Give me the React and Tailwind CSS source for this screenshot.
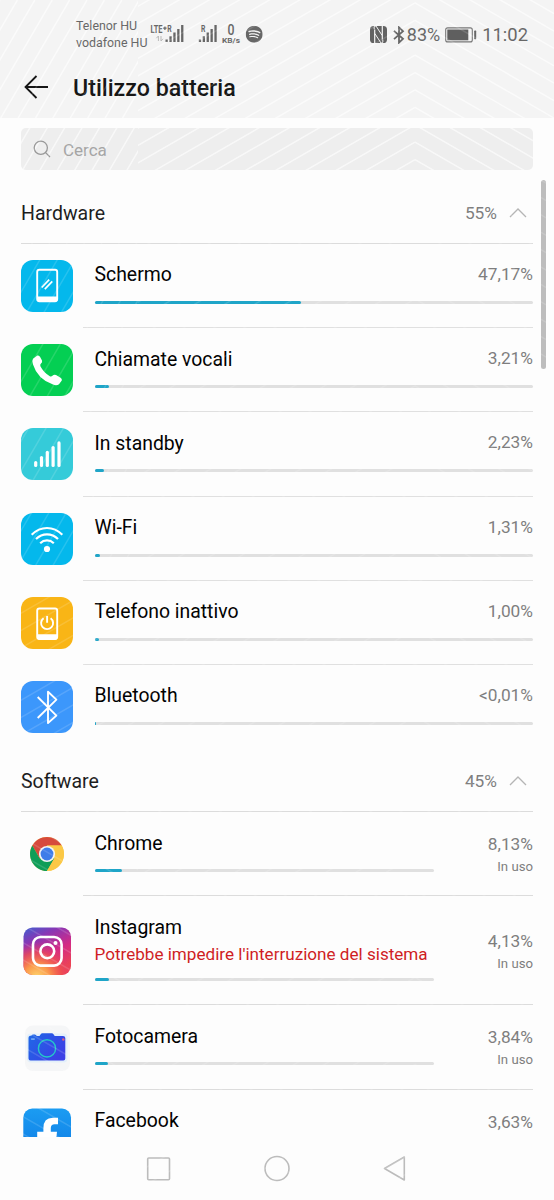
import React from 'react';
import { SiSpotify } from 'react-icons/si';

const tile = 'w-[52px] h-[52px] rounded-[12px] shrink-0 flex items-center justify-center';

const ScreenIcon = () => (
  <div className={`${tile} bg-[#04b8ec]`}>
    <svg width="52" height="52" viewBox="0 0 52 52" fill="none">
      <rect x="16.2" y="9.8" width="20" height="31.5" rx="2.2" stroke="#fff" strokeWidth="1.9" />
      <path d="M16 36.5h20.4v3q0 2.3-2.2 2.3H18.2q-2.2 0-2.2-2.3z" fill="#fff" />
      <path d="M20.7 27.5l7.5-7.8M23.8 29.2l7.5-7.8" stroke="#fff" strokeWidth="1.7" />
    </svg>
  </div>
);

const PhoneIcon = () => (
  <div className={`${tile} bg-[#04cf53]`}>
    <svg width="52" height="52" viewBox="0 0 52 52" fill="#fff">
      <path d="M12 14.8L16.3 11.4Q17.8 11.2 19 12.8L21 16.4Q21.6 18.4 20 19.6Q18.8 20.6 19.4 22.2Q22.3 28 28.8 32.3Q30.4 33 31.4 31.8Q33 30.2 35 31L39.6 33.8Q41.3 35 40.8 36.6L38 40.3Q35.7 41.8 32 40.6Q16.6 35.2 12 20.5Q10.7 16.6 12 14.8Z" />
    </svg>
  </div>
);

const StandbyIcon = () => (
  <div className={`${tile} bg-[#35cbd9]`}>
    <svg width="52" height="52" viewBox="0 0 52 52" fill="#fff">
      <rect x="13.1" y="33" width="3.2" height="6" rx="1.6" />
      <rect x="18.9" y="28" width="3.2" height="11" rx="1.6" />
      <rect x="24.7" y="22.8" width="3.2" height="16.2" rx="1.6" />
      <rect x="30.5" y="18" width="3.2" height="21" rx="1.6" />
      <rect x="36.4" y="13.3" width="3.2" height="25.7" rx="1.6" />
    </svg>
  </div>
);

const WifiIcon = () => (
  <div className={`${tile} bg-[#04b8ec]`}>
    <svg width="52" height="52" viewBox="0 0 52 52" fill="none" stroke="#fff" strokeWidth="2.2">
      <path d="M10.7 21.8Q17.4 15 26 15t15.3 6.8M15 26q4.8-4.7 11-4.7T37 26M19.2 30.2q2.9-2.8 6.8-2.8t6.8 2.8" />
      <circle cx="26" cy="36" r="3.1" fill="#fff" stroke="none" />
    </svg>
  </div>
);

const IdleIcon = () => (
  <div className={`${tile} bg-[#f9b516]`}>
    <svg width="52" height="52" viewBox="0 0 52 52" fill="none">
      <rect x="16.2" y="11.5" width="20" height="30.5" rx="2.2" stroke="#fff" strokeWidth="1.9" />
      <path d="M16 37.2h20.4v3.2q0 2.4-2.2 2.4H18.2q-2.2 0-2.2-2.4z" fill="#fff" />
      <path d="M22.6 21.3a6 6 0 1 0 7 0M26.1 19v6.8" stroke="#fff" strokeWidth="1.9" />
    </svg>
  </div>
);

const BluetoothIcon = () => (
  <div className={`${tile} bg-[#3c97fb]`}>
    <svg width="52" height="52" viewBox="0 0 52 52" fill="none" stroke="#fff" strokeWidth="1.9">
      <path d="M16.7 16L35.4 34.6L27 42V10.8L35.4 18.6L16.7 37" strokeLinejoin="round" />
    </svg>
  </div>
);

const ChromeIcon = () => (
  <svg width="52" height="52" viewBox="0 0 52 52" className="shrink-0">
    <circle cx="26" cy="26" r="17" fill="#fbc845" />
    <path d="M11.3 17.5A17 17 0 0 1 40.7 17.5H26L18.6 30.2Z" fill="#d64a3c" />
    <path d="M11.3 17.5A17 17 0 0 0 26 43L33.4 30.2H18.6Z" fill="#0f9d58" />
    <path d="M40.7 17.5A17 17 0 0 1 26 43L33.4 30.2L26 17.5Z" fill="#fbc845" />
    <circle cx="26" cy="26" r="8.1" fill="#f4f4f4" />
    <circle cx="26" cy="26" r="6.4" fill="#3e7de9" />
  </svg>
);

const InstagramIcon = () => (
  <svg width="52" height="52" viewBox="0 0 52 52" fill="none" className="shrink-0">
    <defs>
      <linearGradient id="igBase" x1="0" y1="0" x2="0.5" y2="1">
        <stop offset="0" stopColor="#3f5fd0" />
        <stop offset="0.3" stopColor="#8a36b4" />
        <stop offset="0.65" stopColor="#d32a85" />
        <stop offset="1" stopColor="#ec4355" />
      </linearGradient>
      <radialGradient id="igGlow" cx="0.28" cy="1.05" r="0.75">
        <stop offset="0" stopColor="#fdd66e" />
        <stop offset="0.35" stopColor="#fb9a4b" />
        <stop offset="0.7" stopColor="#f0514f" stopOpacity="0.7" />
        <stop offset="1" stopColor="#e0357a" stopOpacity="0" />
      </radialGradient>
    </defs>
    <rect x="2.5" y="2.5" width="47.5" height="47.5" rx="9" fill="url(#igBase)" />
    <rect x="2.5" y="2.5" width="47.5" height="47.5" rx="9" fill="url(#igGlow)" />
    <rect x="12" y="12" width="28.6" height="28.6" rx="7.5" stroke="#fff" strokeWidth="2.6" />
    <circle cx="26.3" cy="26.3" r="6.9" stroke="#fff" strokeWidth="2.6" />
    <circle cx="34.5" cy="18.1" r="2" fill="#fff" />
  </svg>
);

const CameraIcon = () => (
  <svg width="52" height="52" viewBox="0 0 52 52" fill="none" className="shrink-0">
    <defs>
      <linearGradient id="camBody" x1="0" y1="0" x2="1" y2="0.6">
        <stop offset="0" stopColor="#1e6ae6" />
        <stop offset="1" stopColor="#3a3fe6" />
      </linearGradient>
    </defs>
    <rect x="4" y="4.5" width="45" height="45.5" rx="8" fill="#f5f6f7" />
    <g transform="translate(0 1.5)">
      <rect x="6" y="11" width="40.5" height="29" rx="4" fill="#e3f0fa" />
      <path d="M9 13.3h1.2q.8-1.3 2-1.3h1.6q1.2 0 2 1.5h2.7l1.4-2.1q.5-.7 1.4-.7h9.6q.9 0 1.4.7l1.4 2.1h8.6q2 0 2 2v20.6q0 2-2 2H9.5q-2 0-2-2V15.2q0-1.6 1.5-1.9z" fill="url(#camBody)" />
      <circle cx="26" cy="25.9" r="8.6" stroke="#25c7c9" strokeWidth="1.4" />
      <rect x="9.8" y="15.8" width="4.2" height="1.6" rx="0.8" fill="#6fa6f3" />
      <circle cx="42.3" cy="17" r="1.2" fill="#e0607c" />
    </g>
  </svg>
);

const FacebookIcon = () => (
  <svg width="52" height="52" viewBox="0 0 52 52" className="shrink-0">
    <defs>
      <linearGradient id="fbBg" x1="0" y1="0" x2="0" y2="1">
        <stop offset="0" stopColor="#1b9cf2" />
        <stop offset="1" stopColor="#0f7be4" />
      </linearGradient>
    </defs>
    <rect x="2.3" y="2.5" width="47.7" height="47.5" rx="9" fill="url(#fbBg)" />
    <path d="M22.4 50V34h-6.2v-8.2h6.2v-3.6q0-10.4 9.5-10.4H37v6.4h-3.4q-3.8 0-3.8 3.8v3.8H36L35.1 34h-5.3v16z" fill="#fff" />
  </svg>
);

const hardware = [
  { name: 'Schermo', value: '47,17%', pct: 47.17, icon: <ScreenIcon /> },
  { name: 'Chiamate vocali', value: '3,21%', pct: 3.21, icon: <PhoneIcon /> },
  { name: 'In standby', value: '2,23%', pct: 2.23, icon: <StandbyIcon /> },
  { name: 'Wi-Fi', value: '1,31%', pct: 1.31, icon: <WifiIcon /> },
  { name: 'Telefono inattivo', value: '1,00%', pct: 1.0, icon: <IdleIcon /> },
  { name: 'Bluetooth', value: '<0,01%', pct: 0.15, icon: <BluetoothIcon /> },
];

const software = [
  { name: 'Chrome', value: '8,13%', pct: 8.13, status: 'In uso', icon: <ChromeIcon /> },
  {
    name: 'Instagram',
    value: '4,13%',
    pct: 4.13,
    status: 'In uso',
    warning: "Potrebbe impedire l'interruzione del sistema",
    icon: <InstagramIcon />,
  },
  { name: 'Fotocamera', value: '3,84%', pct: 3.84, status: 'In uso', icon: <CameraIcon /> },
  { name: 'Facebook', value: '3,63%', pct: 3.63, status: '', icon: <FacebookIcon /> },
];

const Bar = ({ pct }) => (
  <div className="h-[3px] w-full rounded-full bg-[#e0e0e0]">
    <div className="h-full rounded-full bg-[#1fa5c8]" style={{ width: `${pct}%` }} />
  </div>
);

const SectionHeader = ({ title, value }) => (
  <div className="ml-[21px] mr-[21px] h-[63px] pt-[3px] flex items-center border-b border-[#dcdcdc]">
    <h2 className="text-[19.5px] text-[#1c1c1c]">{title}</h2>
    <span className="ml-auto text-[17.3px] text-[#7e7e7e]">{value}</span>
    <svg width="18" height="12" viewBox="0 0 18 12" className="ml-3 mr-[6px] mb-0.5" fill="none">
      <path d="M1 10L9 2l8 8" stroke="#b5b5b5" strokeWidth="1.3" />
    </svg>
  </div>
);

const HardwareRow = ({ item, last }) => (
  <div className="pl-[21px] pr-[21px] h-[84.2px] flex">
    <div className="w-[62px] shrink-0 pt-[16px]">{item.icon}</div>
    <div className={`flex-1 pl-[11.5px] pt-[19px] ${last ? '' : 'border-b border-[#e0e0e0]'}`}>
      <div className="flex h-6 items-center justify-between">
        <span className="text-[19.4px] text-black">{item.name}</span>
        <span className="text-[17.3px] text-[#7e7e7e]">{item.value}</span>
      </div>
      <div className="pt-[14px]"><Bar pct={item.pct} /></div>
    </div>
  </div>
);

const SoftwareRow = ({ item }) => (
  <div className={`pl-[21px] pr-[21px] flex ${item.warning ? 'h-[109px]' : 'h-[84.2px]'}`}>
    <div className="w-[62px] shrink-0 flex items-center">{item.icon}</div>
    <div className="flex-1 pl-[11.5px] flex border-b border-[#dcdcdc]">
      <div className="w-[339px] pt-[19px]">
        <div className="flex h-6 items-center text-[19.4px] text-black">{item.name}</div>
        {item.warning && (
          <div className="flex h-[25px] items-center whitespace-nowrap text-[17.1px] text-[#cf1c22] pt-[5px]">
            {item.warning}
          </div>
        )}
        <div className="pt-[14px]"><Bar pct={item.pct} /></div>
      </div>
      <div className="ml-auto flex flex-col justify-center items-end pt-[3px]">
        <span className="text-[17.3px] leading-6 text-[#7e7e7e]">{item.value}</span>
        <span className="h-[22px] text-[13.2px] leading-[22px] text-[#7e7e7e]">{item.status}</span>
      </div>
    </div>
  </div>
);

const Bars = ({ x }) => (
  <>
    <rect x={x} y="14.5" width="2.3" height="2.5" />
    <rect x={x + 3.9} y="11.3" width="2.3" height="5.7" />
    <rect x={x + 7.8} y="7.5" width="2.3" height="9.5" />
    <rect x={x + 11.7} y="4" width="2.3" height="13" />
    <rect x={x + 15.6} y="0" width="2.3" height="17" />
  </>
);

const StatusBar = () => (
  <div className="h-[60px] pl-[76px] pr-[26px] pt-[17px] flex items-start text-[#676767]">
    <div className="w-[74px] text-[12.4px] leading-[17px] whitespace-nowrap">
      <div>Telenor HU</div>
      <div>vodafone HU</div>
    </div>
    <svg width="116" height="20" viewBox="0 0 116 20" className="mt-[8px] font-bold overflow-visible" fill="#676767">
      <text x="0.5" y="8" fontSize="10.5" textLength="12" lengthAdjust="spacingAndGlyphs">LTE</text>
      <path d="M13.2 3.2h3.4M14.9 1.5v3.4" stroke="#676767" strokeWidth="1.2" />
      <text x="17.3" y="6.6" fontSize="8.5" textLength="4.4" lengthAdjust="spacingAndGlyphs">R</text>
      <path d="M8.4 16v-5l-2 2.2M11 11v5l2-2.2" stroke="#b9b9b9" fill="none" />
      <Bars x={15.5} />
      <text x="51" y="6.6" fontSize="8.5" textLength="4.4" lengthAdjust="spacingAndGlyphs">R</text>
      <Bars x={48.8} />
      <text x="77.5" y="10.4" fontSize="14" fontWeight="500" textLength="7" lengthAdjust="spacingAndGlyphs">0</text>
      <text x="72" y="18" fontSize="7.8" textLength="18" lengthAdjust="spacingAndGlyphs">KB/s</text>
      <g transform="translate(95.7 0.7)"><SiSpotify size={17} /></g>
    </svg>
    <div className="ml-auto h-[35px] flex items-center">
      <svg width="17" height="17" viewBox="0 0 17 17">
        <rect width="17" height="17" rx="3.6" fill="#626262" />
        <path d="M4.7 17V3.4M12.3 0v13.6" stroke="#f4f4f4" strokeWidth="1.2" />
        <path d="M4.2 3.2V1.2q0-1 .9-1.2H6l6.2 9.5M12.8 13.8v2q0 1-.9 1.2H11L4.8 7.5" stroke="#f4f4f4" strokeWidth="1" fill="none" />
      </svg>
      <svg width="12" height="18" viewBox="0 0 12 18" className="ml-[6px]" fill="none" stroke="#676767" strokeWidth="1.8">
        <path d="M1 4.8l9 8-4 3.8V1.4l4 3.8-9 8" />
      </svg>
      <span className="ml-[2px] text-[18px]">83%</span>
      <svg width="32" height="16" viewBox="0 0 32 16" className="ml-[5px]">
        <rect x="0.7" y="0.9" width="26.6" height="14" rx="2" fill="none" stroke="#777" strokeWidth="1.1" />
        <rect x="2.3" y="2.5" width="21" height="10.8" fill="#5f5f5f" />
        <rect x="29.2" y="3.6" width="2" height="8.6" rx="0.6" fill="#676767" />
      </svg>
      <span className="ml-[5px] text-[18.4px]">11:02</span>
    </div>
  </div>
);

// Faint isometric lines, in page coordinates: dx/dy shift them into a nested panel
const step = 17.4;
const idx = Array.from({ length: 100 }, (_, i) => i - 20);

const LineWeave = ({ id, opacity, dx = 0, dy = 0 }) => (
  <svg width="554" height="1200" className="absolute left-0 top-0 pointer-events-none" stroke="#fff" strokeWidth="1.5" strokeOpacity={opacity}>
    <defs>
      <clipPath id={`${id}Steep`}><rect width="138" height="570" /></clipPath>
      <clipPath id={`${id}Rise`}><path d="M138 0H415V1200H138zM0 570H138V780H0z" /></clipPath>
      <clipPath id={`${id}Fall`}><path d="M415 0H554V1200H415zM0 780H138V1200H0z" /></clipPath>
    </defs>
    <g transform={`translate(${-dx} ${-dy})`}>
      <g clipPath={`url(#${id}Steep)`}>
        {idx.map((i) => <path key={i} d={`M${i * step - 350} 600L${i * step} 0`} />)}
      </g>
      <g clipPath={`url(#${id}Rise)`}>
        {idx.map((i) => <path key={i} d={`M0 ${3 + i * step + 239.5}L415 ${3 + i * step}`} />)}
      </g>
      <g clipPath={`url(#${id}Fall)`}>
        {idx.map((i) => <path key={i} d={`M0 ${3 + i * step - 239.5}L554 ${3 + i * step + 80.2}`} />)}
      </g>
    </g>
  </svg>
);

const App = () => {
  return (
    <div className="relative w-[554px] h-[1200px] overflow-hidden bg-[#fdfdfd] font-[Roboto,sans-serif] flex flex-col">
      <header className="relative h-[118px] shrink-0 overflow-hidden bg-[#f4f4f4]">
        <LineWeave id="head" opacity={0.6} />
        <div className="relative">
          <StatusBar />
          <div className="flex items-center h-[56px] pl-[24px]">
            <svg width="25" height="26" viewBox="0 0 25 26" fill="none" stroke="#161616" strokeWidth="1.8" className="-mt-[2px]">
              <path d="M12.5 2L1.5 13l11 11M1.5 13H24" />
            </svg>
            <h1 className="ml-[24px] text-[23.2px] font-medium text-[#161616]">Utilizzo batteria</h1>
          </div>
        </div>
      </header>

      <main className="h-[1019px] shrink-0 overflow-hidden pt-[10px]">
        <div className="relative overflow-hidden mx-[21px] h-[42px] rounded-[5px] bg-[#eee]">
          <LineWeave id="search" opacity={0.55} dx={21} dy={128} />
          <div className="relative h-full flex items-center pl-[12px]">
            <svg width="18" height="18" viewBox="0 0 18 18" fill="none" stroke="#989898" strokeWidth="1.3">
              <circle cx="7.8" cy="7.8" r="6.6" />
              <path d="M12.6 12.6L17 17" />
            </svg>
            <span className="ml-[12px] pt-[3px] text-[17px] text-[#a5a5a5]">Cerca</span>
          </div>
        </div>

        <div className="pt-[11px]">
          <SectionHeader title="Hardware" value="55%" />
          {hardware.map((item, i) => (
            <HardwareRow key={item.name} item={item} last={i === hardware.length - 1} />
          ))}
        </div>

        <SectionHeader title="Software" value="45%" />
        {software.map((item) => (
          <SoftwareRow key={item.name} item={item} />
        ))}
      </main>

      <nav className="h-[63px] shrink-0 flex items-center justify-between pl-[146px] pr-[148px]">
        <svg width="25" height="26" viewBox="0 0 25 26" fill="none">
          <rect x="1.7" y="2" width="21.8" height="21.8" rx="1" stroke="#bcbcbc" strokeWidth="1.6" />
        </svg>
        <svg width="27" height="27" viewBox="0 0 27 27" fill="none">
          <circle cx="13" cy="13.5" r="12" stroke="#bcbcbc" strokeWidth="1.6" />
        </svg>
        <svg width="23" height="27" viewBox="0 0 23 27" fill="none">
          <path d="M21.3 2v23L1.5 13.5z" stroke="#bcbcbc" strokeWidth="1.6" strokeLinejoin="round" />
        </svg>
      </nav>

      <div className="absolute left-[541px] top-[180px] w-[5px] h-[189px] rounded-full bg-[#bdbdbd]" />
      <LineWeave id="page" opacity={0.14} />
    </div>
  );
};

export default App;
